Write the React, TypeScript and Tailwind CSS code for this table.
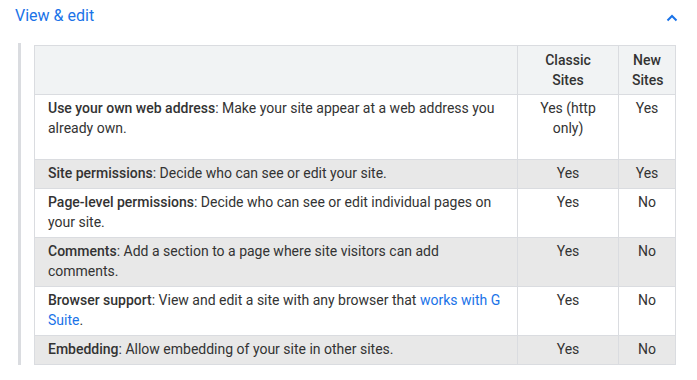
import React from 'react';

type Row = {
    label: string;
    desc: React.ReactNode;
    classic: string;
    next: string;
    shaded: boolean;
    tall?: boolean;
};

const rows: Row[] = [
    {
        label: 'Use your own web address',
        desc: ': Make your site appear at a web address you already own.',
        classic: 'Yes (http only)',
        next: 'Yes',
        shaded: false,
        tall: true,
    },
    { label: 'Site permissions', desc: ': Decide who can see or edit your site.', classic: 'Yes', next: 'Yes', shaded: true },
    {
        label: 'Page-level permissions',
        desc: ': Decide who can see or edit individual pages on your site.',
        classic: 'Yes',
        next: 'No',
        shaded: false,
    },
    {
        label: 'Comments',
        desc: ': Add a section to a page where site visitors can add comments.',
        classic: 'Yes',
        next: 'No',
        shaded: true,
    },
    {
        label: 'Browser support',
        desc: (
            <>
                : View and edit a site with any browser that{' '}
                <a href="#" className="text-[#1a73e8]">works with G Suite</a>.
            </>
        ),
        classic: 'Yes',
        next: 'No',
        shaded: false,
    },
    { label: 'Embedding', desc: ': Allow embedding of your site in other sites.', classic: 'Yes', next: 'No', shaded: true },
];

export default function App() {
    return (
        <div className="w-[697px] h-[380px] bg-white font-['Roboto',sans-serif] text-[#333]">
            {/* Section header */}
            <div className="flex items-center justify-between pl-[15px] pr-[19px] pt-[4px]">
                <h2 className="text-[16px] leading-[24px] text-[#1a73e8]">View &amp; edit</h2>
                <svg width="12" height="8" viewBox="0 0 12 8" className="mt-[3px]">
                    <path d="M1.5 6.5 L6 2 L10.5 6.5" fill="none" stroke="#1a73e8" strokeWidth="2" />
                </svg>
            </div>

            {/* Body */}
            <div className="ml-[18px] mt-[15px] border-l-[3px] border-[#dadce0] pl-[13px] pt-[2px] w-[657px]">
                <table className="w-[641px] border-collapse text-[14px] leading-[20px] table-fixed">
                    <colgroup>
                        <col className="w-[483px]" />
                        <col className="w-[101px]" />
                        <col className="w-[57px]" />
                    </colgroup>
                    <thead>
                        <tr className="bg-[#f1f3f4]">
                            <th className="border border-[#dadce0] px-[13px] pt-[4px] pb-[4px]"></th>
                            <th className="border border-[#dadce0] px-[13px] pt-[4px] pb-[4px] font-medium text-center text-[#333]">
                                Classic Sites
                            </th>
                            <th className="border border-[#dadce0] px-[13px] pt-[4px] pb-[4px] font-medium text-center text-[#333]">
                                New Sites
                            </th>
                        </tr>
                    </thead>
                    <tbody>
                        {rows.map((r) => (
                            <tr key={r.label} className={r.shaded ? 'bg-[#e8e8e8]' : 'bg-white'}>
                                <td
                                    className={`border border-[#dadce0] px-[13px] pt-[3px] align-top ${r.tall ? 'pb-[21px]' : 'pb-[5px]'}`}
                                >
                                    <strong className="font-medium">{r.label}</strong>
                                    {r.desc}
                                </td>
                                <td className="border border-[#dadce0] px-[13px] pt-[3px] pb-[5px] align-top text-center">
                                    {r.classic}
                                </td>
                                <td className="border border-[#dadce0] px-[13px] pt-[3px] pb-[5px] align-top text-center">
                                    {r.next}
                                </td>
                            </tr>
                        ))}
                    </tbody>
                </table>
            </div>
        </div>
    );
}
